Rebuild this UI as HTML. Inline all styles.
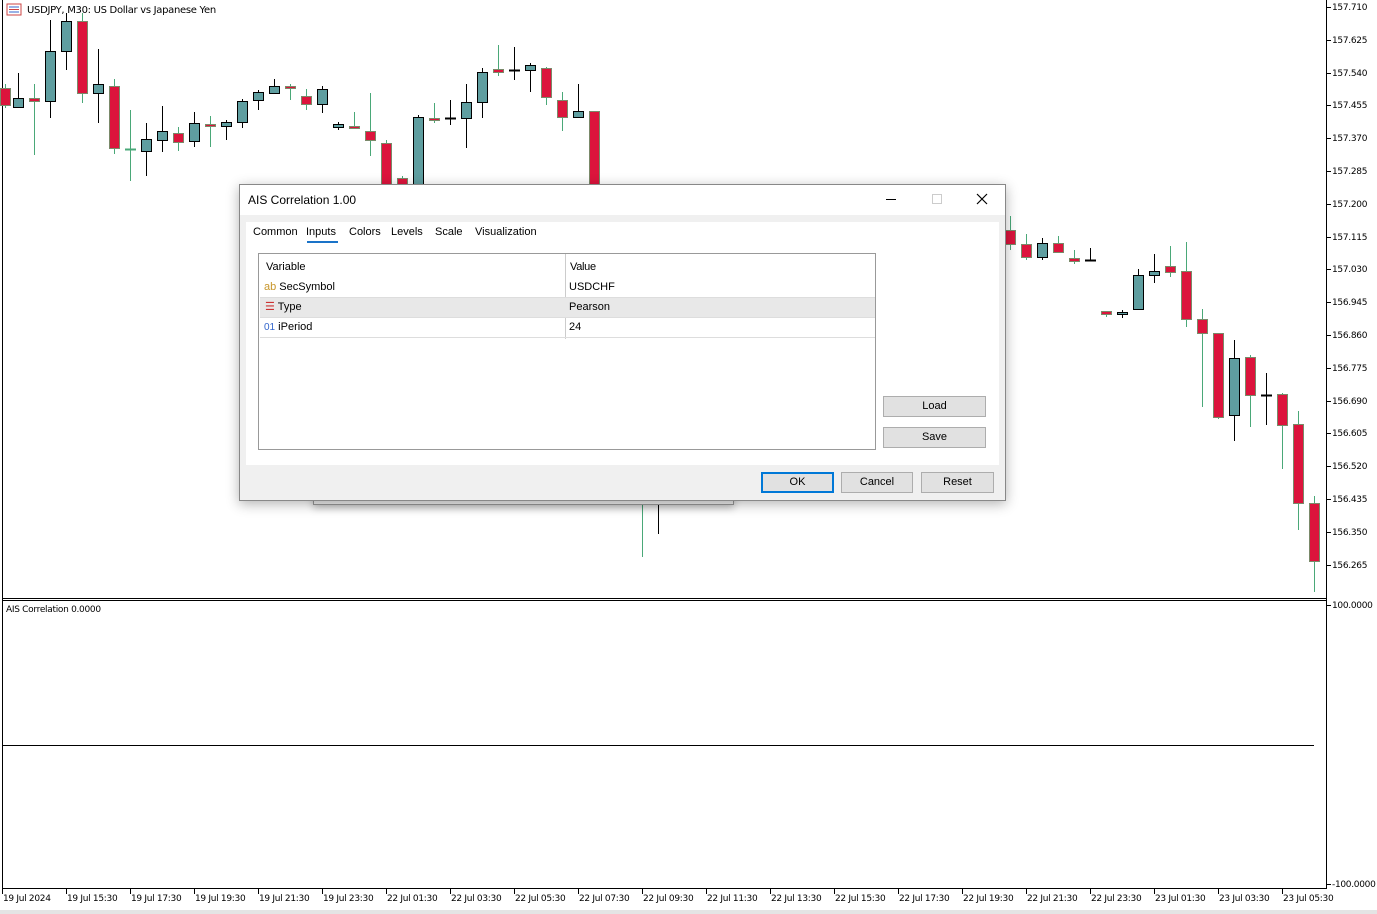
<!DOCTYPE html>
<html><head><meta charset="utf-8"><style>
*{margin:0;padding:0;box-sizing:border-box}
body{width:1377px;height:914px;background:#fff;position:relative;overflow:hidden;font-family:"Liberation Sans",sans-serif;color:#000}
.ax{position:absolute;font-size:9px;font-family:"DejaVu Sans","Liberation Sans",sans-serif;letter-spacing:-0.3px}
.dlg{position:absolute;left:239px;top:184px;width:767px;height:317px;background:#f0f0f0;border:1px solid #888;box-shadow:0 3px 12px rgba(0,0,0,.3);font-family:"Liberation Sans",sans-serif;font-size:11px}
.btn{position:absolute;background:#e1e1e1;border:1px solid #adadad;text-align:center;font-size:11px;line-height:18px}
.tab{position:absolute;top:41px;font-size:11px}
.row{position:absolute;left:1px;width:615px;height:20px;border-bottom:1px solid #ddd;line-height:19px;font-size:11px}
</style></head><body>
<svg id="c" width="1377" height="914" style="position:absolute;left:0;top:0">
<line x1="2.5" y1="0" x2="2.5" y2="888" stroke="#000"/>
<line x1="1326.5" y1="0" x2="1326.5" y2="888" stroke="#000"/>
<line x1="2" y1="598.5" x2="1327" y2="598.5" stroke="#000"/>
<line x1="2" y1="600.5" x2="1327" y2="600.5" stroke="#000"/>
<line x1="2" y1="888.5" x2="1327" y2="888.5" stroke="#000"/>
<line x1="3" y1="745.5" x2="1314" y2="745.5" stroke="#000"/>
<rect x="0" y="910" width="1377" height="4" fill="#e4e4e4"/>
<g id="cd"></g><g id="tk" stroke="#000"></g>
<g transform="translate(7,4)"><rect x="0" y="0" width="14" height="11" fill="#fff" stroke="#c44"/><line x1="2" y1="3" x2="12" y2="3" stroke="#36c"/><line x1="2" y1="5.5" x2="12" y2="5.5" stroke="#c44"/><line x1="2" y1="8" x2="12" y2="8" stroke="#36c"/></g>
</svg>
<div class="ax" style="left:27px;top:5px;font-size:10px">USDJPY, M30:  US Dollar vs Japanese Yen</div>
<div class="ax" style="left:6px;top:605px">AIS Correlation 0.0000</div>
<div id="pl"></div>

<div style="position:absolute;left:313px;top:488px;width:421px;height:17px;border:1px solid #999;background:#f0f0f0;box-shadow:0 3px 8px rgba(0,0,0,.25)"></div>

<div class="dlg">
 <div style="position:absolute;left:0;top:0;width:765px;height:30px;background:#fff"></div>
 <div style="position:absolute;left:8px;top:8px;font-size:12px">AIS Correlation 1.00</div>
 <div style="position:absolute;left:646px;top:14px;width:10px;height:1px;background:#000"></div>
 <div style="position:absolute;left:692px;top:9px;width:10px;height:10px;border:1px solid #ccc"></div>
 <svg style="position:absolute;left:736px;top:8px" width="12" height="12"><path d="M1 1L11 11M11 1L1 11" stroke="#000" stroke-width="1.2"/></svg>
 <div style="position:absolute;left:6px;top:37px;width:753px;height:243px;background:#fff"></div>
 <div class="tab" style="left:13px">Common</div>
 <div class="tab" style="left:66px">Inputs</div>
 <div style="position:absolute;left:67px;top:56px;width:31px;height:2px;background:#1a73c8"></div>
 <div class="tab" style="left:109px">Colors</div>
 <div class="tab" style="left:151px">Levels</div>
 <div class="tab" style="left:195px">Scale</div>
 <div class="tab" style="left:235px">Visualization</div>
 <div style="position:absolute;left:18px;top:68px;width:618px;height:197px;border:1px solid #999;background:#fff">
  <div class="row" style="top:2px;height:21px;border:none;padding-left:6px;line-height:22px">Variable</div>
  <div style="position:absolute;left:306px;top:0;width:1px;height:85px;background:#ccc"></div>
  <div class="ax" style="left:311px;top:7px;font-size:11px;font-family:'Liberation Sans'">Value</div>
  <div class="row" style="top:24px"><span style="color:#c8962a;margin-left:4px">ab</span> SecSymbol<span style="position:absolute;left:309px">USDCHF</span></div>
  <div class="row" style="top:44px;background:#e8e8e8"><span style="color:#c33;margin-left:5px">☰</span> Type<span style="position:absolute;left:309px">Pearson</span></div>
  <div class="row" style="top:64px"><span style="color:#36c;margin-left:4px;font-size:10px">01</span> iPeriod<span style="position:absolute;left:309px">24</span></div>
 </div>
 <div class="btn" style="left:643px;top:211px;width:103px;height:21px">Load</div>
 <div class="btn" style="left:643px;top:242px;width:103px;height:21px">Save</div>
 <div class="btn" style="left:521px;top:287px;width:73px;height:21px;border:2px solid #0078d7;line-height:17px">OK</div>
 <div class="btn" style="left:601px;top:287px;width:72px;height:21px">Cancel</div>
 <div class="btn" style="left:681px;top:287px;width:73px;height:21px">Reset</div>
</div>

<div id="tl"></div>
<script>
var C=[[5,84,108,88,105,0],[18,73,108,98,107,1],[34,84,155,98,101,0],[50,20,118,51,101,1],[66,13,70,21,51,1],[82,13,103,21,93,0],[98,49,123,84,93,1],[114,79,154,86,148,0],[130,110,181,149,150,2],[146,123,176,139,151,1],[162,106,152,131,140,1],[178,127,151,133,142,0],[194,112,147,123,141,1],[210,116,147,124,126,0],[226,120,140,122,126,1],[242,99,128,101,122,1],[258,90,110,92,100,1],[274,79,94,86,93,1],[290,84,100,86,88,0],[306,89,110,96,104,0],[322,86,113,89,104,1],[338,122,130,124,127,1],[354,112,128,126,128,0],[370,93,156,131,140,0],[386,140,190,143,190,0],[402,176,190,178,190,0],[418,115,190,117,190,1],[434,103,123,118,119,0],[450,100,125,118,119,3],[466,84,148,102,118,1],[482,68,118,72,102,1],[498,45,76,69,72,0],[514,47,80,70,71,3],[530,63,92,65,70,1],[546,67,105,68,97,0],[562,92,131,100,117,0],[578,84,118,111,117,1],[594,111,190,111,190,0],
[1010,216,250,230,244,0],[1026,234,260,244,257,0],[1042,238,260,243,257,1],[1058,236,252,243,252,0],[1074,250,264,258,261,0],[1090,248,261,260,261,3],[1106,311,317,311,314,0],[1122,310,318,312,314,1],[1138,269,309,275,309,1],[1154,254,283,271,275,1],[1170,246,277,266,272,0],[1186,242,327,271,319,0],[1202,309,407,319,333,0],[1218,333,419,333,417,0],[1234,340,441,358,415,1],[1250,355,427,357,395,0],[1266,373,425,395,395,3],[1282,393,469,394,425,0],[1298,411,530,424,503,0],[1314,496,592,503,561,0]];
var s='';
C.forEach(function(c){var x=c[0],t=c[5];
 if(t==3){s+='<line x1="'+(x+.5)+'" y1="'+c[1]+'" x2="'+(x+.5)+'" y2="'+c[2]+'" stroke="#000"/><line x1="'+(x-5)+'" y1="'+(c[3]+.5)+'" x2="'+(x+6)+'" y2="'+(c[3]+.5)+'" stroke="#000" stroke-width="2"/>';return;}
 if(t==2){s+='<line x1="'+(x+.5)+'" y1="'+c[1]+'" x2="'+(x+.5)+'" y2="'+c[2]+'" stroke="#4aa878"/><line x1="'+(x-5)+'" y1="'+(c[3]+.5)+'" x2="'+(x+6)+'" y2="'+(c[3]+.5)+'" stroke="#4aa878" stroke-width="2"/>';return;}
 var w=t==1?'#000':'#4aa878',f=t==1?'#5f9ea0':'#dc143c',b=t==1?'#000':'#7a8a6a';
 s+='<line x1="'+(x+.5)+'" y1="'+c[1]+'" x2="'+(x+.5)+'" y2="'+c[2]+'" stroke="'+w+'"/>';
 s+='<rect x="'+(x-4.5)+'" y="'+(c[3]+.5)+'" width="10" height="'+Math.max(2,c[4]-c[3])+'" fill="'+f+'" stroke="'+b+'"/>';
});
s+='<line x1="642.5" y1="505" x2="642.5" y2="557" stroke="#4aa878"/><line x1="658.5" y1="505" x2="658.5" y2="534" stroke="#000"/>';
document.getElementById('cd').innerHTML=s;
var P=['157.710','157.625','157.540','157.455','157.370','157.285','157.200','157.115','157.030','156.945','156.860','156.775','156.690','156.605','156.520','156.435','156.350','156.265'];
var h='',tk='';
P.forEach(function(p,i){var y=Math.round(7+i*32.8);h+='<div class="ax" style="left:1332px;top:'+(y-4)+'px">'+p+'</div>';tk+='<line x1="1327" y1="'+(y+.5)+'" x2="1331" y2="'+(y+.5)+'"/>';});
h+='<div class="ax" style="left:1332px;top:601px">100.0000</div><div class="ax" style="left:1332px;top:880px">-100.0000</div>';
tk+='<line x1="1327" y1="605.5" x2="1331" y2="605.5"/><line x1="1327" y1="884.5" x2="1331" y2="884.5"/>';
document.getElementById('pl').innerHTML=h;
var T=['19 Jul 2024','19 Jul 15:30','19 Jul 17:30','19 Jul 19:30','19 Jul 21:30','19 Jul 23:30','22 Jul 01:30','22 Jul 03:30','22 Jul 05:30','22 Jul 07:30','22 Jul 09:30','22 Jul 11:30','22 Jul 13:30','22 Jul 15:30','22 Jul 17:30','22 Jul 19:30','22 Jul 21:30','22 Jul 23:30','23 Jul 01:30','23 Jul 03:30','23 Jul 05:30'];
var g='';T.forEach(function(t,i){var x=2+i*64;g+='<div class="ax" style="left:'+(x+1)+'px;top:894px">'+t+'</div>';tk+='<line x1="'+(x+.5)+'" y1="889" x2="'+(x+.5)+'" y2="894"/>';});
document.getElementById('tl').innerHTML=g;
document.getElementById('tk').innerHTML=tk;
</script>
</body></html>
